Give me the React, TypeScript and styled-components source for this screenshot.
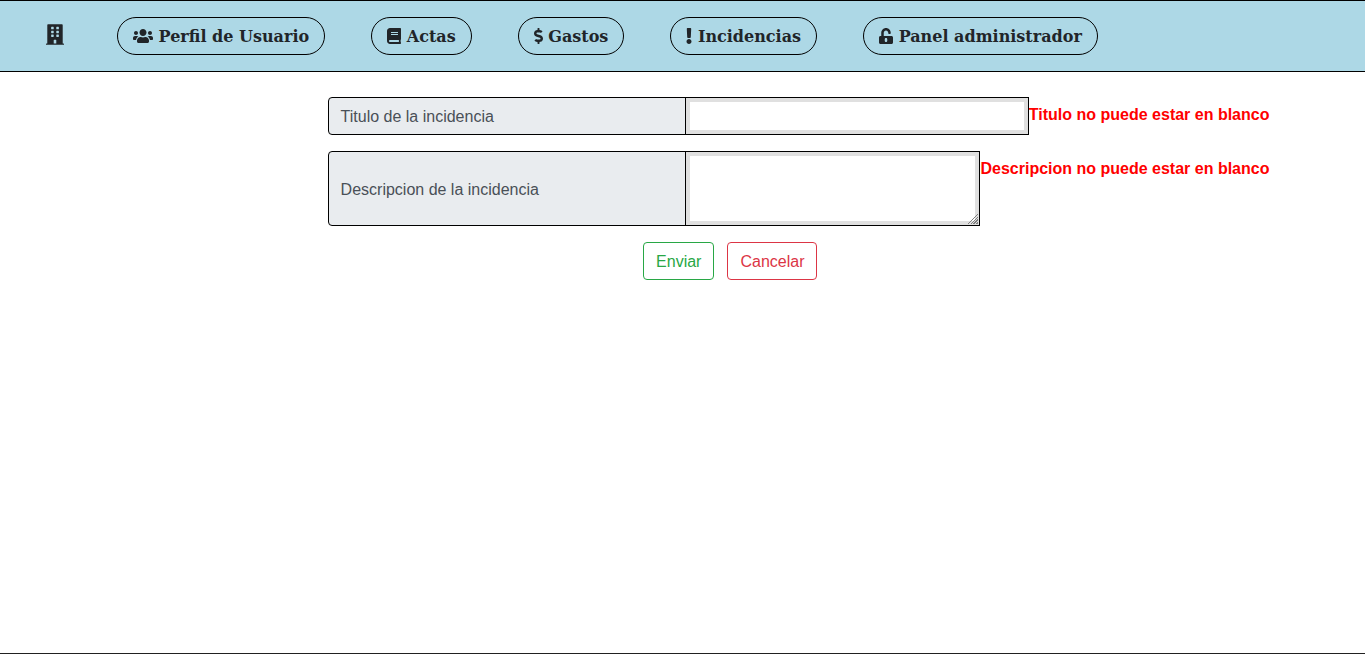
import React from "react";
import styled, { createGlobalStyle } from "styled-components";
import {
  FaBook,
  FaBuilding,
  FaDollarSign,
  FaExclamation,
  FaUnlockAlt,
  FaUsers,
} from "react-icons/fa";

const GlobalStyle = createGlobalStyle`
  *, *::before, *::after { box-sizing: border-box; }
  body {
    margin: 0;
    background: #fff;
    color: #212529;
    font-family: "Liberation Sans", Arial, sans-serif;
    font-size: 16px;
    line-height: 24px;
  }
`;

const Page = styled.div`
  display: flex;
  flex-direction: column;
  min-height: 100vh;
`;

const Header = styled.header`
  background: lightblue;
  border: solid #000;
  border-width: 1px 0;
  padding: 16px 46px;
`;

const Nav = styled.nav`
  display: flex;
  align-items: center;
  gap: 46px;
`;

const HomeLink = styled.a`
  display: flex;
  width: 25px;
  padding-bottom: 3px;
  color: #212529;

  svg {
    width: 18px;
    height: 21px;
  }
`;

const NavLink = styled.a<{ $iconWidth: number }>`
  display: inline-block;
  padding: 7px 15px 5px;
  border: 1px solid #000;
  border-radius: 20px;
  color: #212529;
  font-family: "DejaVu Serif", serif;
  font-weight: bold;
  text-decoration: none;
  white-space: nowrap;

  svg {
    height: 16px;
    width: ${(p) => p.$iconWidth}px;
    vertical-align: -2px;
  }
`;

const Form = styled.form`
  flex: 1;
  padding-top: 25px;
`;

const Field = styled.div`
  display: flex;
  margin: 0 7% 16px 24%;
`;

const FieldLabel = styled.label`
  display: flex;
  align-items: center;
  flex: 0 0 38%;
  padding: 7px 12px 5px;
  border: 1px solid #000;
  border-radius: 4px 0 0 4px;
  background: #e9ecef;
  color: #495057;
`;

const controlStyle = `
  display: block;
  flex: 1 1 0;
  min-width: 0;
  margin: 0 0 0 -1px;
  padding: 6px 12px;
  border: 1px solid #000;
  border-radius: 0;
  background: #fff;
  box-shadow: inset 0 0 0 4px #e0e0e0;
  color: #495057;
  font: inherit;
  outline: none;
`;

const TextInput = styled.input`
  ${controlStyle}
  height: 38px;
`;

const TextArea = styled.textarea`
  ${controlStyle}
  height: 75px;
  resize: vertical;

  &::-webkit-resizer {
    background: linear-gradient(
        135deg,
        transparent 8px,
        #808080 8px 9px,
        transparent 9px 10px,
        #808080 10px 11px,
        transparent 11px 12px,
        #808080 12px 13px,
        transparent 13px 14px,
        #808080 14px 15px,
        transparent 15px
      )
      right 1px bottom 1px / 11px 11px no-repeat;
  }
`;

const ErrorText = styled.strong`
  padding-top: 6px;
  color: red;
  white-space: nowrap;
`;

const Actions = styled.div`
  display: flex;
  justify-content: center;
  gap: 13px;
  margin-left: 7%;
`;

const Button = styled.button<{ $color: string }>`
  padding: 7px 12px 5px;
  border: 1px solid ${(p) => p.$color};
  border-radius: 4px;
  background: transparent;
  color: ${(p) => p.$color};
  font: inherit;
  cursor: pointer;
`;

const Footer = styled.footer`
  border-top: 1px solid #212121;
`;

const links = [
  { text: "Perfil de Usuario", Icon: FaUsers, iconWidth: 20 },
  { text: "Actas", Icon: FaBook, iconWidth: 14 },
  { text: "Gastos", Icon: FaDollarSign, iconWidth: 9 },
  { text: "Incidencias", Icon: FaExclamation, iconWidth: 6 },
  { text: "Panel administrador", Icon: FaUnlockAlt, iconWidth: 14 },
];

export default function App() {
  return (
    <Page>
      <GlobalStyle />
      <Header>
        <Nav>
          <HomeLink href="#" aria-label="Inicio">
            <FaBuilding />
          </HomeLink>
          {links.map(({ text, Icon, iconWidth }) => (
            <NavLink href="#" key={text} $iconWidth={iconWidth}>
              <Icon /> {text}
            </NavLink>
          ))}
        </Nav>
      </Header>
      <Form noValidate onSubmit={(e) => e.preventDefault()}>
        <Field>
          <FieldLabel htmlFor="titulo">Titulo de la incidencia</FieldLabel>
          <TextInput id="titulo" type="text" aria-describedby="titulo-error" />
          <ErrorText id="titulo-error">Titulo no puede estar en blanco</ErrorText>
        </Field>
        <Field>
          <FieldLabel htmlFor="descripcion">Descripcion de la incidencia</FieldLabel>
          <TextArea id="descripcion" aria-describedby="descripcion-error" />
          <ErrorText id="descripcion-error">Descripcion no puede estar en blanco</ErrorText>
        </Field>
        <Actions>
          <Button type="submit" $color="#28a745">Enviar</Button>
          <Button type="button" $color="#dc3545">Cancelar</Button>
        </Actions>
      </Form>
      <Footer />
    </Page>
  );
}
